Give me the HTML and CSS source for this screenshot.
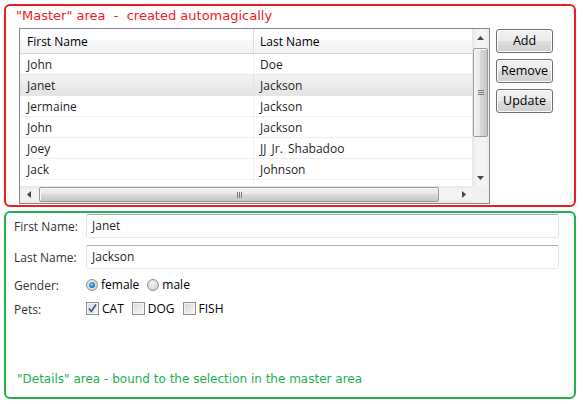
FILE: index.html
```html
<!DOCTYPE html>
<html lang="en">
<head>
<meta charset="utf-8">
<title>Master / Details</title>
<link rel="stylesheet" href="styles.css">
</head>
<body>
<section class="master">
  <div class="master-title">"Master" area  -  created automagically</div>
  <div class="master-body">
    <div class="grid">
      <div class="grid-main">
        <div class="grid-view">
          <div class="row head"><div class="cell c1">First Name</div><div class="cell c2">Last Name</div></div>
          <div class="row"><div class="cell c1">John</div><div class="cell c2">Doe</div></div>
          <div class="row selected"><div class="cell c1">Janet</div><div class="cell c2">Jackson</div></div>
          <div class="row"><div class="cell c1">Jermaine</div><div class="cell c2">Jackson</div></div>
          <div class="row"><div class="cell c1">John</div><div class="cell c2">Jackson</div></div>
          <div class="row"><div class="cell c1">Joey</div><div class="cell c2 wide">JJ Jr. Shabadoo</div></div>
          <div class="row"><div class="cell c1">Jack</div><div class="cell c2">Johnson</div></div>
          <div class="row partial"><div class="cell c1"></div><div class="cell c2"></div></div>
        </div>
        <div class="vscroll">
          <div class="sb-btn"><svg width="7" height="4" viewBox="0 0 7 4"><polygon points="0,4 7,4 3.5,0" fill="#454545"/></svg></div>
          <div class="vtrack">
            <div class="vthumb"><span class="vgrip"></span></div>
          </div>
          <div class="sb-btn"><svg width="7" height="4" viewBox="0 0 7 4"><polygon points="0,0 7,0 3.5,4" fill="#454545"/></svg></div>
        </div>
      </div>
      <div class="grid-bottom">
        <div class="hscroll">
          <div class="sb-btn"><svg width="4" height="7" viewBox="0 0 4 7"><polygon points="4,0 4,7 0,3.5" fill="#454545"/></svg></div>
          <div class="htrack">
            <div class="hthumb"><span class="hgrip"></span></div>
          </div>
          <div class="sb-btn"><svg width="4" height="7" viewBox="0 0 4 7"><polygon points="0,0 0,7 4,3.5" fill="#454545"/></svg></div>
        </div>
        <div class="corner"></div>
      </div>
    </div>
    <div class="buttons">
      <button class="btn" type="button">Add</button>
      <button class="btn" type="button">Remove</button>
      <button class="btn" type="button">Update</button>
    </div>
  </div>
</section>

<section class="details">
  <div class="form">
    <label class="lbl">First Name:</label>
    <div class="textbox">Janet</div>
    <label class="lbl">Last Name:</label>
    <div class="textbox">Jackson</div>
    <label class="lbl">Gender:</label>
    <div class="choices">
      <span class="choice"><span class="radio checked"></span>female</span>
      <span class="choice"><span class="radio"></span>male</span>
    </div>
    <label class="lbl">Pets:</label>
    <div class="choices">
      <span class="choice"><span class="check"><svg width="11" height="11" viewBox="0 0 11 11"><path d="M2 5.5 L4.3 8.5 L9 1.5" fill="none" stroke="#3a5486" stroke-width="1.6"/></svg></span>CAT</span>
      <span class="choice"><span class="check"></span>DOG</span>
      <span class="choice"><span class="check"></span>FISH</span>
    </div>
  </div>
  <div class="details-caption">"Details" area - bound to the selection in the master area</div>
</section>
</body>
</html>
```

FILE: styles.css
```css
* { box-sizing: border-box; }

html, body {
  margin: 0;
  padding: 0;
  background: #ffffff;
}

body {
  width: 583px;
  height: 404px;
  overflow: hidden;
  font-family: "Open Sans", "Noto Sans", sans-serif;
  font-size: 12px;
  color: #1f1f1f;
}

/* ---------- master ---------- */
.master {
  margin: 4px 0 0 4px;
  width: 572px;
  height: 203px;
  border: 2px solid #ed1c24;
  border-radius: 6px;
  padding: 0 0 0 13px;
}

.master-title {
  height: 22px;
  padding-top: 2px;
  margin-left: -3px;
  font-family: "DejaVu Sans", Verdana, sans-serif;
  font-size: 13px;
  line-height: 15px;
  color: #ed1c24;
  white-space: pre;
}

.master-body {
  display: flex;
  align-items: flex-start;
  gap: 6px;
}

.grid {
  width: 471px;
  height: 176px;
  border: 1px solid #828790;
  display: flex;
  flex-direction: column;
  background: #fff;
}

.grid-main {
  flex: 1;
  min-height: 0;
  display: flex;
}

.grid-view {
  flex: 1;
  overflow: hidden;
}

.row {
  display: flex;
  height: 21px;
  border-bottom: 1px solid #efefef;
  line-height: 18px;
}

.cell {
  padding: 2px 6px 0 7px;
  white-space: nowrap;
  overflow: hidden;
}

.c1 {
  width: 234px;
  border-right: 1px solid #efefef;
}

.c2 {
  flex: 1;
  padding-left: 6px;
}

.c2.wide {
  word-spacing: 2px;
}

.row.head {
  height: 25px;
  border-bottom: 1px solid #d5d5d5;
  background: linear-gradient(#ffffff 0%, #ffffff 45%, #f6f7f8 46%, #f1f2f4 100%);
  color: #000;
}

.row.head .cell {
  padding-top: 4px;
}

.row.head .c1 {
  border-right: 1px solid #dcdcdc;
  box-shadow: 1px 0 0 #ffffff;
}

.row.selected {
  background: linear-gradient(#f3f3f3, #e3e3e3);
  border-top: 1px solid #e8e8e8;
  margin-top: -1px;
  height: 22px;
  border-bottom: 1px solid #e6e6e6;
}

.row.selected .c1 {
  border-right-color: #e4e4e4;
}

.row.partial {
  border-bottom: 0;
}

/* ---------- scrollbars ---------- */
.vscroll {
  width: 17px;
  display: flex;
  flex-direction: column;
  background: linear-gradient(to right, #e6e6e6, #f4f4f4 25%, #f4f4f4 75%, #eaeaea);
}

.sb-btn {
  width: 17px;
  height: 17px;
  display: flex;
  align-items: center;
  justify-content: center;
  flex: none;
}

.vtrack {
  flex: 1;
  padding: 2px 1px 0 1px;
}

.vthumb {
  height: 89px;
  border: 1px solid #9a9a9a;
  border-radius: 2px;
  background: linear-gradient(to right, #f1f1f1 0%, #e9e9e9 45%, #dadada 50%, #c6c6c6 100%);
  box-shadow: inset 1px 1px 0 #fbfbfb;
  display: flex;
  align-items: center;
  justify-content: center;
}

.vgrip {
  width: 6px;
  height: 5px;
  background: repeating-linear-gradient(#7a7a7a 0, #7a7a7a 1px, transparent 1px, transparent 2px);
}

.grid-bottom {
  height: 17px;
  display: flex;
  flex: none;
}

.hscroll {
  flex: 1;
  display: flex;
  background: linear-gradient(#e6e6e6, #f4f4f4 25%, #f4f4f4 75%, #eaeaea);
}

.htrack {
  flex: 1;
  padding: 1px 0 1px 2px;
}

.hthumb {
  width: 400px;
  height: 15px;
  border: 1px solid #9a9a9a;
  border-radius: 2px;
  background: linear-gradient(#f1f1f1 0%, #e9e9e9 45%, #dadada 50%, #c6c6c6 100%);
  box-shadow: inset 1px 1px 0 #fbfbfb;
  display: flex;
  align-items: center;
  justify-content: center;
}

.hgrip {
  width: 5px;
  height: 6px;
  background: repeating-linear-gradient(to right, #7a7a7a 0, #7a7a7a 1px, transparent 1px, transparent 2px);
}

.corner {
  width: 17px;
  background: #f0f0f0;
}

/* ---------- buttons ---------- */
.buttons {
  display: flex;
  flex-direction: column;
  gap: 6px;
  margin-top: 1px;
}

.btn {
  width: 57px;
  height: 24px;
  padding: 0;
  border: 1px solid #707070;
  border-radius: 3px;
  background: linear-gradient(#f2f2f2 0%, #ebebeb 50%, #dddddd 51%, #cfcfcf 100%);
  box-shadow: inset 0 0 0 1px #fcfcfc;
  font-family: "Open Sans", "Noto Sans", sans-serif;
  font-size: 12.5px;
  color: #000;
  line-height: 20px;
}

/* ---------- details ---------- */
.details {
  margin: 4px 0 0 4px;
  width: 572px;
  height: 188px;
  border: 2px solid #22b14c;
  border-radius: 6px;
  padding: 1px 15px 0 8px;
  display: flex;
  flex-direction: column;
}

.form {
  display: grid;
  grid-template-columns: 72px 1fr;
  grid-template-rows: 24px 24px 17px 17px;
  row-gap: 7px;
  align-items: center;
}

.lbl {
  color: #333;
  line-height: 17px;
  padding-top: 1px;
}

.textbox {
  height: 24px;
  border: 1px solid #e2e3ea;
  border-top-color: #abadb3;
  border-bottom-color: #e3e9ef;
  border-radius: 2px;
  padding: 2px 5px 0 5px;
  line-height: 18px;
  color: #1f1f1f;
}

.choices {
  display: flex;
  align-items: center;
  gap: 8px;
  color: #000;
}

.choice {
  display: flex;
  align-items: center;
  gap: 3px;
  line-height: 17px;
}

.radio {
  width: 12px;
  height: 12px;
  border-radius: 50%;
  border: 1px solid #8e8f8f;
  background: radial-gradient(circle at 40% 35%, #f4f4f4, #d4d4d4 80%);
  position: relative;
  flex: none;
}

.radio.checked::after {
  content: "";
  position: absolute;
  left: 2px;
  top: 2px;
  width: 6px;
  height: 6px;
  border-radius: 50%;
  background: radial-gradient(circle at 45% 40%, #a8d8f0 0%, #2a8ad4 45%, #134a86 100%);
}

.check {
  width: 13px;
  height: 13px;
  border: 1px solid #8e8f8f;
  background: linear-gradient(135deg, #d8d8d8, #f6f6f6);
  box-shadow: inset 0 0 0 1px #f4f4f4;
  flex: none;
  display: flex;
  align-items: center;
  justify-content: center;
}

.details-caption {
  margin-top: auto;
  margin-bottom: 11px;
  margin-left: 3px;
  height: 14px;
  font-family: "DejaVu Sans", Verdana, sans-serif;
  font-size: 12px;
  line-height: 14px;
  color: #22b14c;
  white-space: pre;
}
```
